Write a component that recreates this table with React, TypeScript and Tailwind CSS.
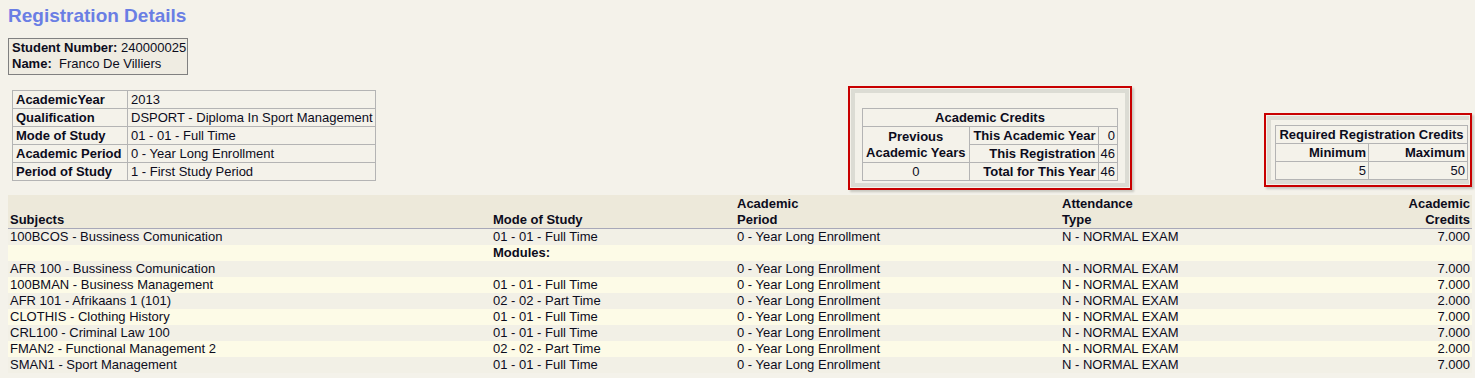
import React from 'react'

const info = [
  ['AcademicYear', '2013'],
  ['Qualification', 'DSPORT - Diploma In Sport Management'],
  ['Mode of Study', '01 - 01 - Full Time'],
  ['Academic Period', '0 - Year Long Enrollment'],
  ['Period of Study', '1 - First Study Period'],
]

type Row = {
  subject: string
  mode: string
  period: string
  attendance: string
  credits: string
  modules?: boolean
}

const rows: Row[] = [
  { subject: '100BCOS - Bussiness Comunication', mode: '01 - 01 - Full Time', period: '0 - Year Long Enrollment', attendance: 'N - NORMAL EXAM', credits: '7.000' },
  { subject: '', mode: 'Modules:', period: '', attendance: '', credits: '', modules: true },
  { subject: 'AFR 100 - Bussiness Comunication', mode: '', period: '0 - Year Long Enrollment', attendance: 'N - NORMAL EXAM', credits: '7.000' },
  { subject: '100BMAN - Business Management', mode: '01 - 01 - Full Time', period: '0 - Year Long Enrollment', attendance: 'N - NORMAL EXAM', credits: '7.000' },
  { subject: 'AFR 101 - Afrikaans 1 (101)', mode: '02 - 02 - Part Time', period: '0 - Year Long Enrollment', attendance: 'N - NORMAL EXAM', credits: '2.000' },
  { subject: 'CLOTHIS - Clothing History', mode: '01 - 01 - Full Time', period: '0 - Year Long Enrollment', attendance: 'N - NORMAL EXAM', credits: '7.000' },
  { subject: 'CRL100 - Criminal Law 100', mode: '01 - 01 - Full Time', period: '0 - Year Long Enrollment', attendance: 'N - NORMAL EXAM', credits: '7.000' },
  { subject: 'FMAN2 - Functional Management 2', mode: '02 - 02 - Part Time', period: '0 - Year Long Enrollment', attendance: 'N - NORMAL EXAM', credits: '2.000' },
  { subject: 'SMAN1 - Sport Management', mode: '01 - 01 - Full Time', period: '0 - Year Long Enrollment', attendance: 'N - NORMAL EXAM', credits: '7.000' },
]

const cell = 'border border-[#b4b4b4] px-[2px] h-[18px] leading-[16px] whitespace-nowrap'

function RedBox({
  children,
  className,
  band = 'border-4',
}: {
  children: React.ReactNode
  className: string
  band?: string
}) {
  return (
    <div className={`border-2 border-[#c80000] p-px shadow-[2px_2px_2px_#c8c8c0] ${className}`}>
      <div className={`${band} border-[#dcdcd4]`}>{children}</div>
    </div>
  )
}

export default function App() {
  return (
    <div className="h-[378px] w-[1475px] overflow-hidden bg-[#f4f2ea] pl-2 pr-[3px] pt-[5px] font-['Liberation_Sans',Arial,sans-serif] text-[13px] text-[#0c0c1c]">
      <h1 className="text-[19px] font-bold leading-[22px] text-[#6a7ee4]">Registration Details</h1>

      <div className="flex h-[168px] items-start">
        <div className="w-[370px] shrink-0">
          <div className="mt-[11px] inline-block border border-[#808080] bg-[#efece2] pl-[3px] pr-px pt-px pb-[2px] leading-[16px]">
            <div>
              <b>Student Number:</b> 240000025
            </div>
            <div>
              <b>Name:</b>&nbsp; Franco De Villiers
            </div>
          </div>

          <table className="ml-1 mt-[15px] border-collapse border border-[#a0a0a0]">
            <tbody>
              {info.map(([k, v]) => (
                <tr key={k}>
                  <td className={`${cell} w-[115px] pl-[3px] font-bold`}>{k}</td>
                  <td className={`${cell} w-[247px] pl-[3px]`}>{v}</td>
                </tr>
              ))}
            </tbody>
          </table>
        </div>

        <RedBox className="ml-[470px] mt-[59px] w-[284px] shrink-0">
          <div className="px-[7px] pb-[2px] pt-[15px]">
            <table className="w-[256px] border-collapse border border-[#a0a0a0] font-bold">
              <tbody>
                <tr>
                  <td colSpan={3} className={`${cell} text-center`}>
                    Academic Credits
                  </td>
                </tr>
                <tr>
                  <td rowSpan={2} className={`${cell} w-[108px] text-center`}>
                    Previous
                    <br />
                    Academic Years
                  </td>
                  <td className={`${cell} w-[130px] text-right`}>This Academic Year</td>
                  <td className={`${cell} text-right font-normal`}>0</td>
                </tr>
                <tr>
                  <td className={`${cell} text-right`}>This Registration</td>
                  <td className={`${cell} text-right font-normal`}>46</td>
                </tr>
                <tr>
                  <td className={`${cell} text-center font-normal`}>0</td>
                  <td className={`${cell} text-right`}>Total for This Year</td>
                  <td className={`${cell} text-right font-normal`}>46</td>
                </tr>
              </tbody>
            </table>
          </div>
        </RedBox>

        <RedBox className="ml-auto mt-[86px] w-[208px] shrink-0" band="border-4 border-r-0">
          <div className="pb-0 pl-[4px] pt-[5px]">
            <table className="w-[193px] border-collapse border border-[#a0a0a0] font-bold">
              <tbody>
                <tr>
                  <td colSpan={2} className={`${cell} text-center`}>
                    Required Registration Credits
                  </td>
                </tr>
                <tr>
                  <td className={`${cell} w-[93px] text-right`}>Minimum</td>
                  <td className={`${cell} text-right`}>Maximum</td>
                </tr>
                <tr>
                  <td className={`${cell} text-right font-normal`}>5</td>
                  <td className={`${cell} text-right font-normal`}>50</td>
                </tr>
              </tbody>
            </table>
          </div>
        </RedBox>
      </div>

      <table className="w-[1464px] border-collapse leading-[16px]">
        <colgroup>
          <col className="w-[483px]" />
          <col className="w-[244px]" />
          <col className="w-[325px]" />
          <col className="w-[300px]" />
          <col />
        </colgroup>
        <thead>
          <tr className="h-[33px] border-b border-[#a8a8b8] bg-[#ede9da] align-bottom font-bold">
            <th className="pl-[2px] text-left">Subjects</th>
            <th className="pl-[2px] text-left">Mode of Study</th>
            <th className="pl-[2px] text-left">
              Academic
              <br />
              Period
            </th>
            <th className="pl-[2px] text-left">
              Attendance
              <br />
              Type
            </th>
            <th className="pr-[2px] text-right">
              Academic
              <br />
              Credits
            </th>
          </tr>
        </thead>
        <tbody>
          {rows.map((r, i) => (
            <tr key={i} className={i % 2 === 1 ? 'h-4 bg-[#fdfbe7]' : 'h-4 bg-[#f2f0e6]'}>
              <td className="pl-[2px]">{r.subject}</td>
              <td className={r.modules ? 'pl-[2px] font-bold' : 'pl-[2px]'}>{r.mode}</td>
              <td className="pl-[2px]">{r.period}</td>
              <td className="pl-[2px]">{r.attendance}</td>
              <td className="pr-[2px] text-right">{r.credits}</td>
            </tr>
          ))}
        </tbody>
      </table>
    </div>
  )
}
